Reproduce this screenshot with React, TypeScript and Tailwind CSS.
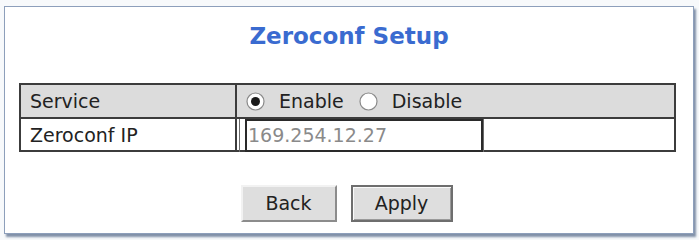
const font = "font-['DejaVu_Sans',Verdana,sans-serif]";

function Radio({ checked }: { checked?: boolean }) {
  return (
    <svg width="19" height="19" viewBox="0 0 19 19" className="shrink-0">
      <circle cx="9.5" cy="9.5" r="8.5" fill="#fff" stroke="#8a8a8a" strokeWidth="1.2" />
      {checked && <circle cx="9.5" cy="9.5" r="4.5" fill="#1a1a1a" />}
    </svg>
  );
}

export default function App() {
  return (
    <div className={`w-[699px] h-[240px] bg-[#f7f9fb] pt-[6px] pl-[4px] ${font}`}>
      <div className="w-[690px] h-[228px] bg-white border border-[#8d9fbb] shadow-[2px_3px_2px_rgba(90,110,140,0.75)] flex flex-col">
        <h1 className="pt-[16px] text-center text-[23px] leading-[26px] font-bold text-[#3a6bd0]">
          Zeroconf Setup
        </h1>

        <div className="ml-[14px] mt-[34px] w-[657px] border-2 border-[#3c3c3c] text-[19px] text-[#222]">
          <div className="grid grid-cols-[216px_1fr] h-[34px] bg-[#dcdcdc] border-b-2 border-[#3c3c3c]">
            <div className="pl-[9px] flex items-center border-r-2 border-[#3c3c3c]">Service</div>
            <div className="pl-[9px] flex items-center">
              <Radio checked />
              <span className="ml-[14px]">Enable</span>
              <span className="ml-[15px]"><Radio /></span>
              <span className="ml-[14px]">Disable</span>
            </div>
          </div>
          <div className="grid grid-cols-[216px_1fr] h-[31px]">
            <div className="pl-[9px] flex items-center border-r-2 border-[#3c3c3c]">Zeroconf IP</div>
            <div className="flex items-stretch border-l border-[#6a6a6a] ml-[2px] pl-[5px]">
              <div className="w-[238px] border-2 border-[#2a2a2a] flex items-center pl-[1px] text-[#8a8a8a] bg-white">
                169.254.12.27
              </div>
              <div className="flex-1 border-l border-[#6a6a6a]" />
            </div>
          </div>
        </div>

        <div className="mt-[33px] flex justify-center gap-[14px] pr-[5px] text-[19px] text-[#222]">
          <button className="w-[96px] h-[37px] bg-[#dedede] border-2 border-t-[#f2f2f2] border-l-[#f2f2f2] border-r-[#8c8c8c] border-b-[#8c8c8c]">
            Back
          </button>
          <button className="w-[102px] h-[37px] bg-[#dedede] border-2 border-[#6e6e6e] shadow-[inset_1px_1px_0_#fafafa,inset_-1px_-1px_0_#9a9a9a]">
            Apply
          </button>
        </div>
      </div>
    </div>
  );
}
